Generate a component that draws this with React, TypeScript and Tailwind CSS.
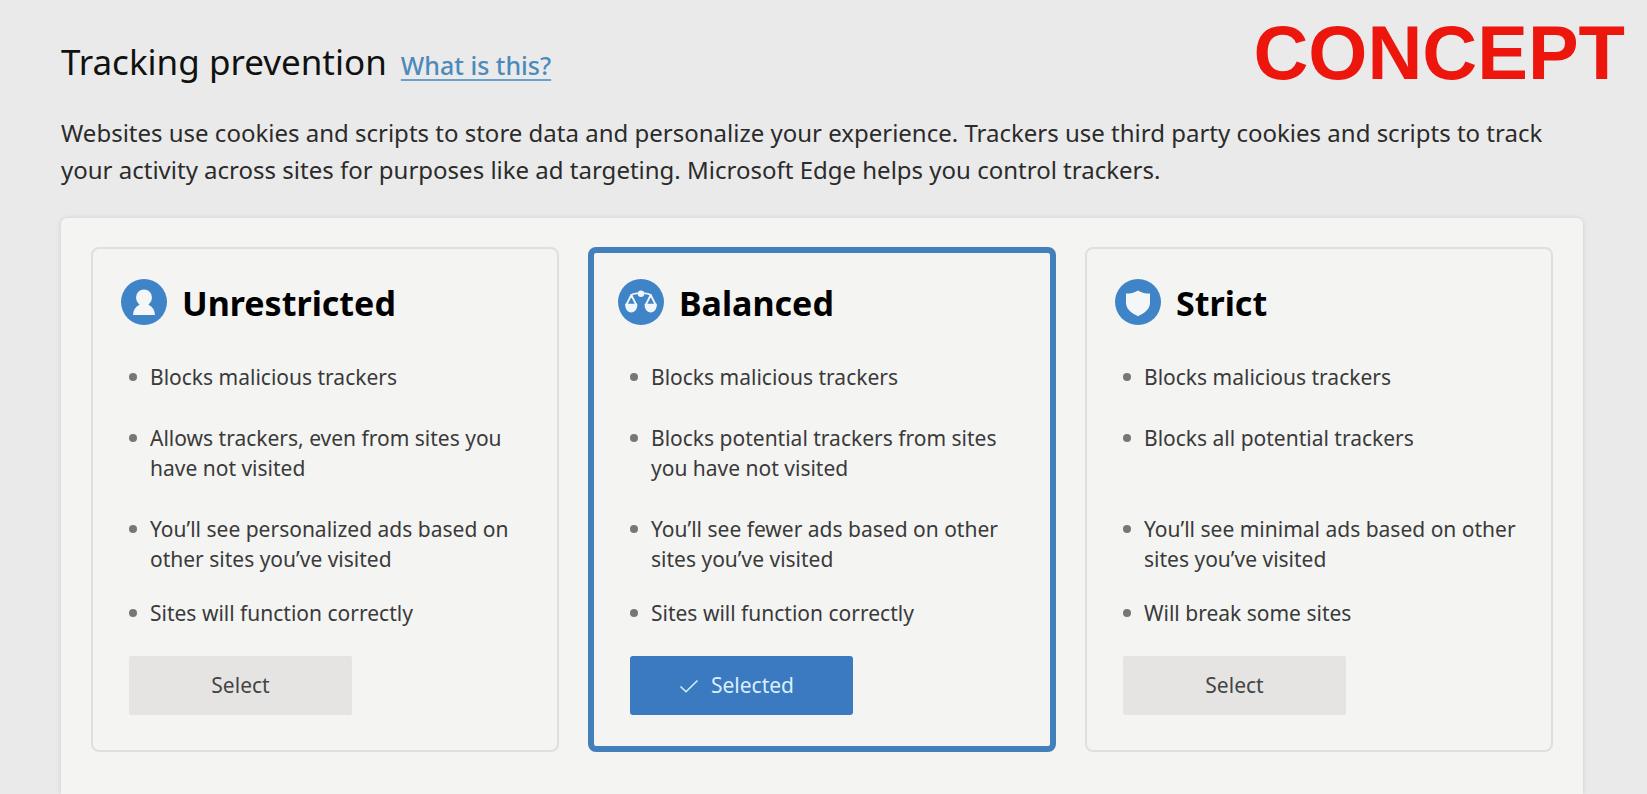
import { useState } from "react";

type Level = {
  id: string;
  title: string;
  points: string[];
  icon: React.ReactNode;
};

function PersonIcon() {
  return (
    <svg viewBox="0 0 46 46" className="size-[46px] shrink-0" aria-hidden="true">
      <circle cx="23" cy="23" r="23" fill="#4084c8" />
      <circle cx="23" cy="18.5" r="8" fill="#f4f6f8" />
      <path
        d="M12 36c.3-4.800 2.400-8.400 6.400-10.200l-.6-2.800h10.400l-.6 2.800c4 1.800 6.100 5.400 6.400 10.200z"
        fill="#f4f6f8"
      />
    </svg>
  );
}

function ScalesIcon() {
  return (
    <svg viewBox="0 0 46 46" className="size-[46px] shrink-0" aria-hidden="true">
      <circle cx="23" cy="23" r="23" fill="#4084c8" />
      <g stroke="#eef6fb" fill="none" strokeWidth="1.8" strokeLinecap="round" strokeLinejoin="round">
        <path d="M13.300 16c2-1.300 4-1.600 6-1.600h7.400c2 0 4 .3 6 1.600" />
        <path d="M13.300 16L8.300 26M13.300 16l5 10M32.700 16l-5 10M32.700 16l5 10" />
      </g>
      <circle cx="23" cy="14.700" r="3.200" fill="#eef6fb" />
      <path
        d="M7.300 24.800h12c.5 5.400-2.400 8.600-6 8.600s-6.500-3.200-6-8.600zM26.700 24.800h12c.5 5.400-2.400 8.600-6 8.600s-6.500-3.200-6-8.600z"
        fill="#eef6fb"
      />
    </svg>
  );
}

function ShieldIcon() {
  return (
    <svg viewBox="0 0 46 46" className="size-[46px] shrink-0" aria-hidden="true">
      <circle cx="23" cy="23" r="23" fill="#4084c8" />
      <path
        d="M23 11.500c3 2.200 7 3.200 12 3.100v9c0 6.200-4.500 10.200-12 13.600-7.500-3.400-12-7.400-12-13.600v-9c5 .1 9-.9 12-3.100z"
        fill="#f4f6f8"
      />
    </svg>
  );
}

const levels: Level[] = [
  {
    id: "unrestricted",
    title: "Unrestricted",
    icon: <PersonIcon />,
    points: [
      "Blocks malicious trackers",
      "Allows trackers, even from sites you have not visited",
      "You’ll see personalized ads based on other sites you’ve visited",
      "Sites will function correctly",
    ],
  },
  {
    id: "balanced",
    title: "Balanced",
    icon: <ScalesIcon />,
    points: [
      "Blocks malicious trackers",
      "Blocks potential trackers from sites you have not visited",
      "You’ll see fewer ads based on other sites you’ve visited",
      "Sites will function correctly",
    ],
  },
  {
    id: "strict",
    title: "Strict",
    icon: <ShieldIcon />,
    points: [
      "Blocks malicious trackers",
      "Blocks all potential trackers",
      "You’ll see minimal ads based on other sites you’ve visited",
      "Will break some sites",
    ],
  },
];

const rowSpacing = ["", "mt-[31px] min-h-[60px]", "mt-[31px] min-h-[60px]", "mt-6"];

function LevelCard({ level, selected, onSelect }: { level: Level; selected: boolean; onSelect: () => void }) {
  return (
    <section
      aria-labelledby={level.id}
      className={
        selected
          ? "rounded-lg border-6 border-[#437fbb] px-6 pt-[26px] pb-[31px]"
          : "rounded-lg border-2 border-[#dfdfde] px-7 pt-[30px] pb-[35px]"
      }
    >
      <div className="flex items-center gap-[15px]">
        {level.icon}
        <h2 id={level.id} className="pt-0.5 text-[34px] leading-[42px] font-bold text-black">
          {level.title}
        </h2>
      </div>
      <div className={selected ? "pl-3" : "pl-2"}>
        <ul className="mt-[37px] text-[21px] leading-[30px] text-[#3a3a3a]">
          {level.points.map((point, i) => (
            <li key={point} className={`flex gap-[13px] ${rowSpacing[i]}`}>
              <span className="mt-[11px] size-2 shrink-0 rounded-full bg-[#777777]" />
              <span>{point}</span>
            </li>
          ))}
        </ul>
        <button
          type="button"
          aria-pressed={selected}
          onClick={onSelect}
          className={
            selected
              ? "mt-7 flex h-[59px] w-[223px] items-center justify-center gap-3 rounded-[3px] bg-[#3b7ac0] pr-2.5 text-[21px] text-[#d9f0fb]"
              : "mt-7 flex h-[59px] w-[223px] items-center justify-center rounded-[2px] bg-[#e5e4e3] text-[21px] text-[#444444]"
          }
        >
          {selected && (
            <svg viewBox="0 0 20 20" className="size-5" fill="none" stroke="currentColor" strokeWidth="1.5" aria-hidden="true">
              <path d="M1.500 10.500l5.500 5.300L18.500 4.500" />
            </svg>
          )}
          {selected ? "Selected" : "Select"}
        </button>
      </div>
    </section>
  );
}

export default function App() {
  const [current, setCurrent] = useState("balanced");

  return (
    <main className="relative flex min-h-screen flex-col bg-[#eaeaea] pt-[38px] pr-16 pl-[61px] font-['Noto_Sans','Open_Sans',sans-serif]">
      <div className="absolute top-[11px] right-[22px] font-['Liberation_Sans',sans-serif] text-[76px] leading-[84px] font-bold text-[#ec160d]">
        CONCEPT
      </div>
      <header className="flex items-baseline gap-[14px]">
        <h1 className="text-[35px] leading-[48px] text-[#111111]">Tracking prevention</h1>
        <a
          href="#about"
          className="text-[25px] leading-[28px] font-medium text-[#4d8abb] underline decoration-[#6c9fca] decoration-2 underline-offset-4"
        >
          What is this?
        </a>
      </header>
      <p className="mt-7 pr-3 text-[24px] leading-[37px] text-[#2b2b2b]">
        Websites use cookies and scripts to store data and personalize your experience. Trackers use third party
        cookies and scripts to track your activity across sites for purposes like ad targeting. Microsoft Edge helps
        you control trackers.
      </p>
      <div className="mt-[30px] grid flex-1 grid-cols-3 content-start gap-[29px] rounded-t-md bg-[#f4f4f3] px-[30px] pt-[29px] pb-10 shadow-[0_0_5px_rgba(0,0,0,0.12)]">
        {levels.map((level) => (
          <LevelCard
            key={level.id}
            level={level}
            selected={level.id === current}
            onSelect={() => setCurrent(level.id)}
          />
        ))}
      </div>
    </main>
  );
}
